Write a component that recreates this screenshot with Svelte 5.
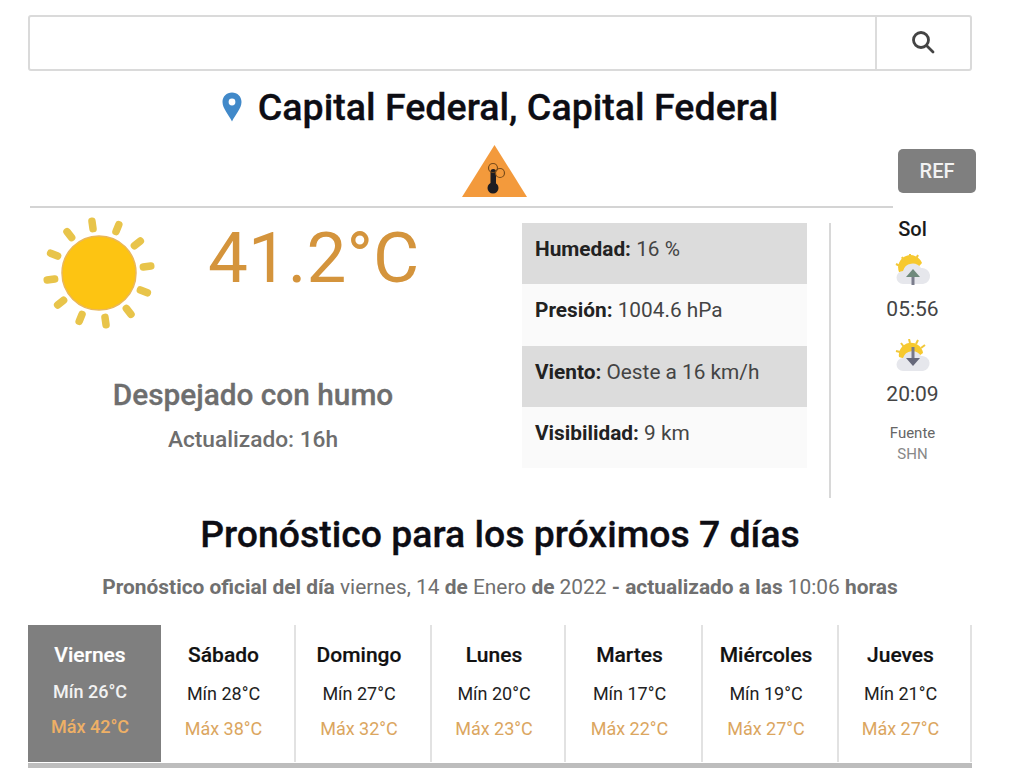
<script>
  const rows = [
    { label: 'Humedad:', value: '16 %' },
    { label: 'Presión:', value: '1004.6 hPa' },
    { label: 'Viento:', value: 'Oeste a 16 km/h' },
    { label: 'Visibilidad:', value: '9 km' }
  ];
  const days = [
    { name: 'Viernes', min: 26, max: 42 },
    { name: 'Sábado', min: 28, max: 38 },
    { name: 'Domingo', min: 27, max: 32 },
    { name: 'Lunes', min: 20, max: 23 },
    { name: 'Martes', min: 17, max: 22 },
    { name: 'Miércoles', min: 19, max: 27 },
    { name: 'Jueves', min: 21, max: 27 }
  ];
  const rays = [-8, 22, 52, 82, 112, 142, 172, 202, 232, 262, 292, 322];
</script>

<div class="page">
  <div class="search">
    <div class="search-input"></div>
    <div class="search-btn">
      <svg width="24" height="24" viewBox="0 0 24 24" fill="none" stroke="#444" stroke-width="2.8" stroke-linecap="round">
        <circle cx="10" cy="10" r="7.5" />
        <path d="M16 16 L22 22" />
      </svg>
    </div>
  </div>

  <h1 class="city">
    <svg class="pin" width="20" height="30" viewBox="0 0 20 30">
      <path d="M10 0.5C4.6 0.5 0.5 4.6 0.5 10c0 6.500 6.500 13 9.500 19.500C13 23 19.500 16.500 19.500 10 19.500 4.600 15.400 0.500 10 0.500z" fill="#4189c9" />
      <circle cx="10" cy="10" r="3.4" fill="#fff" />
    </svg>
    Capital Federal, Capital Federal
  </h1>

  <div class="alert">
    <svg width="66" height="53" viewBox="0 0 66 53">
      <path d="M32.500 0 L65 52 L0 52 Z" fill="#f39a3c" />
      <rect x="28.500" y="24" width="5.500" height="19" rx="2.700" fill="#1c1c22" />
      <circle cx="31" cy="43" r="5.500" fill="#1c1c22" />
      <circle cx="31" cy="23" r="4.500" fill="none" stroke="#7a4c1a" stroke-width="1.200" />
      <circle cx="38" cy="28" r="4.500" fill="none" stroke="#7a4c1a" stroke-width="1.200" />
    </svg>
  </div>

  <button class="ref" type="button">REF</button>

  <div class="rule"></div>

  <div class="now">
    <div class="now-left">
      <div class="now-top">
        <svg width="116" height="116" viewBox="-58 -58 116 116">
          {#each rays as a}
            <rect x="-3.500" y="-56" width="7.500" height="15" rx="3.700" fill="#e8c44a" transform="rotate({a})" />
          {/each}
          <circle r="37" fill="#fdc412" stroke="#eab75a" stroke-width="1.500" />
        </svg>
        <div class="temp">41.2°C</div>
      </div>
      <div class="sky">Despejado con humo</div>
      <div class="updated">Actualizado: 16h</div>
    </div>

    <div class="stats">
      {#each rows as r, i}
        <div class="stat" class:shade={i % 2 === 0}><b>{r.label}</b> {r.value}</div>
      {/each}
    </div>

    <div class="sun">
      <div class="sun-title">Sol</div>
      <svg width="38" height="34" viewBox="0 0 38 34">
        <path d="M5 18 A12 12 0 0 1 28 9 L18 20 Z" fill="#f7c92e" />
        <path d="M2 10 L6 12 M8 3 L10 7 M16 0 L16 4 M24 1 L22 5" stroke="#f2c83a" stroke-width="2" />
        <path d="M9 30 a6.500 6.500 0 0 1 0 -13 a10 10 0 0 1 18 -3 a8 8 0 0 1 2 16 Z" fill="#e6e7ec" />
        <path d="M19 31 V20" stroke="#7b7d8c" stroke-width="3" />
        <path d="M12 23 L19 15 L26 23 Z" fill="#6f8a7c" />
      </svg>
      <div class="time first">05:56</div>
      <svg width="38" height="34" viewBox="0 0 38 34">
        <path d="M5 18 A12 12 0 0 1 29 14 L18 22 Z" fill="#f7c92e" />
        <path d="M2 12 L6 13 M7 4 L10 8 M15 0 L16 4 M24 1 L22 5 M31 6 L27 9" stroke="#f2c83a" stroke-width="2" />
        <path d="M9 32 a6.500 6.500 0 0 1 0 -13 a10 10 0 0 1 18 -2 a7.500 7.500 0 0 1 2 15 Z" fill="#e6e7ec" />
        <path d="M19 8 V20" stroke="#77788a" stroke-width="3" />
        <path d="M12 19 L19 27 L26 19 Z" fill="#66687a" />
      </svg>
      <div class="time">20:09</div>
      <div class="source">Fuente<br /><span>SHN</span></div>
    </div>
  </div>

  <h2 class="forecast-title">Pronóstico para los próximos 7 días</h2>
  <p class="forecast-sub">
    <b>Pronóstico oficial del día</b> viernes, 14 <b>de</b> Enero <b>de</b> 2022 <b>- actualizado a las</b> 10:06 <b>horas</b>
  </p>

  <div class="days">
    {#each days as d, i}
      <div class="day" class:active={i === 0}>
        <div class="day-name">{d.name}</div>
        <div class="day-min">Mín {d.min}°C</div>
        <div class="day-max">Máx {d.max}°C</div>
      </div>
    {/each}
  </div>
  <div class="bottom-bar"></div>
</div>

<style>
  :global(body) {
    margin: 0;
    background: #fff;
    overflow: hidden;
  }
  .page {
    position: relative;
    box-sizing: border-box;
    width: 1024px;
    height: 768px;
    overflow: hidden;
    padding: 15px 52px 0 28px;
    font-family: Roboto, "Liberation Sans", sans-serif;
    color: #111;
  }
  .search {
    display: flex;
    height: 56px;
    box-sizing: border-box;
    border: 2px solid #dadada;
    border-radius: 3px;
  }
  .search-input {
    flex: 1;
  }
  .search-btn {
    width: 95px;
    border-left: 2px solid #dcdcdc;
    display: flex;
    align-items: center;
    justify-content: center;
    padding: 0 2px 2px 0;
    box-sizing: border-box;
  }
  .city {
    margin: 12px 0 0;
    height: 48px;
    display: flex;
    align-items: center;
    justify-content: center;
    gap: 16px;
    font-size: 37.600px;
    font-weight: 500;
    color: #0d0d14;
    -webkit-text-stroke: 0.3px #0d0d14;
  }
  .alert {
    margin-top: 14px;
    height: 53px;
    display: flex;
    justify-content: center;
    padding-right: 10px;
  }
  .ref {
    position: absolute;
    left: 898px;
    top: 149px;
    width: 78px;
    height: 44px;
    border: none;
    border-radius: 5px;
    background: #7f7f7f;
    color: #f2f2f2;
    font: 500 20px Roboto, sans-serif;
    padding: 0;
  }
  .rule {
    margin: 8px 79px 0 2px;
    height: 2px;
    background: #d4d4d4;
  }
  .now {
    display: flex;
    margin-top: 15px;
    height: 275px;
  }
  .now-left {
    width: 494px;
    flex-shrink: 0;
    text-align: center;
  }
  .now-top {
    display: flex;
    align-items: flex-start;
    height: 155px;
  }
  .now-top svg {
    margin: -8px 0 0 13px;
  }
  .temp {
    margin-left: 51px;
    margin-top: -1px;
    font-size: 71px;
    line-height: 72px;
    color: #d4943c;
  }
  .sky {
    font-size: 29.800px;
    line-height: 34px;
    font-weight: 500;
    color: #6e6e6e;
    width: 450px;
    -webkit-text-stroke: 0.3px #6e6e6e;
  }
  .updated {
    margin-top: 13px;
    font-size: 22.700px;
    line-height: 30px;
    font-weight: 500;
    color: #6e6e6e;
    width: 450px;
  }
  .stats {
    width: 285px;
    height: 245px;
    flex-shrink: 0;
    background: #fafafa;
  }
  .stat {
    height: 61.250px;
    box-sizing: border-box;
    padding: 12px 13px 0;
    font-size: 20.800px;
    line-height: 28px;
    color: #444;
  }
  .stat b {
    font-weight: 700;
    color: #222;
  }
  .shade {
    background: #dcdcdc;
  }
  .sun {
    margin: 0 -22px 0 22px;
    flex: 1;
    border-left: 2px solid #d8d8d8;
    display: flex;
    flex-direction: column;
    align-items: center;
  }
  .sun-title {
    margin-top: -8px;
    margin-bottom: 11px;
    font-size: 20px;
    line-height: 28px;
    font-weight: 500;
    color: #1a1a1a;
  }
  .time {
    font-size: 21px;
    line-height: 28px;
    color: #444;
    margin: 7px 0 17px;
  }
  .time.first {
    margin-bottom: 16px;
  }
  .source {
    font-size: 15px;
    line-height: 21px;
    color: #666;
    text-align: center;
    margin-top: -2px;
  }
  .source span {
    color: #888;
  }
  .forecast-title {
    margin: 13px 0 0;
    text-align: center;
    font-size: 37.400px;
    line-height: 46px;
    font-weight: 500;
    color: #0d0d14;
    -webkit-text-stroke: 0.3px #0d0d14;
  }
  .forecast-sub {
    margin: 16px 0 0;
    text-align: center;
    font-size: 20.900px;
    line-height: 28px;
    color: #707070;
  }
  .forecast-sub b {
    font-weight: 700;
  }
  .days {
    display: grid;
    grid-template-columns: 133px 135px 136px 134px 137px 136px 133px;
    margin-top: 24px;
    height: 137px;
  }
  .day {
    text-align: center;
    border-right: 2px solid #e2e2e2;
    padding: 16px 8px 0 0;
  }
  .day.active {
    background: #7f7f7f;
    border-right: none;
    color: #fff;
    padding-right: 9px;
  }
  .day-name {
    font-size: 21px;
    line-height: 28px;
    font-weight: 500;
    -webkit-text-stroke: 0.2px currentColor;
  }
  .day-min {
    margin-top: 13px;
    font-size: 18px;
    line-height: 24px;
    color: #222;
  }
  .active .day-min {
    margin-top: 11px;
    color: #f2f2f2;
    font-weight: 500;
  }
  .day-max {
    margin-top: 11px;
    font-size: 18px;
    line-height: 24px;
    color: #dba65f;
  }
  .active .day-max {
    color: #eeb066;
    font-weight: 500;
  }
  .bottom-bar {
    margin-top: 1px;
    height: 6px;
    background: #bdbdbd;
  }
</style>
